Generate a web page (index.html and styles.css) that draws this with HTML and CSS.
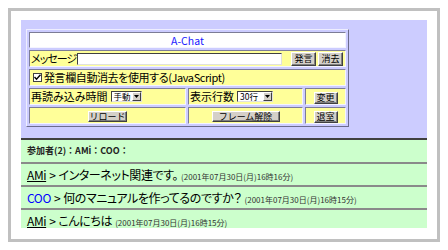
FILE: index.html
```html
<!DOCTYPE html>
<html lang="ja">
<head>
    <meta charset="UTF-8">
    <title>A-Chat</title>
    <link rel="stylesheet" href="styles.css">
</head>
<body>
    <div class="frame">
        <!-- control frame -->
        <div class="control">
            <table class="chat-form">
                <tr>
                    <td colspan="3" class="title">A-Chat</td>
                </tr>
                <tr>
                    <td colspan="3">
                        <div class="msg-row">
                            <span class="label">メッセージ</span>
                            <input class="msg-input" type="text">
                            <span class="btn-group">
                                <button class="btn tall">発言</button>
                                <button class="btn tall">消去</button>
                            </span>
                        </div>
                    </td>
                </tr>
                <tr>
                    <td colspan="3">
                        <label class="check">
                            <span class="checkbox">
                                <svg width="7" height="7" viewBox="0 0 7 7"><path d="M0.5 3 L2.5 5.2 L6.5 0.8" fill="none" stroke="#000" stroke-width="1.4"/></svg>
                            </span>
                            発言欄自動消去を使用する(JavaScript)
                        </label>
                    </td>
                </tr>
                <tr>
                    <td class="col1">
                        <span class="field">再読み込み時間
                            <span class="select w-manual">手動<span class="arrow"><svg width="5" height="3" viewBox="0 0 5 3"><path d="M0 0 H5 L2.5 3 Z" fill="#000"/></svg></span></span>
                        </span>
                    </td>
                    <td class="col2">
                        <span class="field">表示行数
                            <span class="select w-lines">30行<span class="arrow"><svg width="5" height="3" viewBox="0 0 5 3"><path d="M0 0 H5 L2.5 3 Z" fill="#000"/></svg></span></span>
                        </span>
                    </td>
                    <td class="col3 center"><button class="btn">変更</button></td>
                </tr>
                <tr>
                    <td class="center"><button class="btn w-reload">リロード</button></td>
                    <td class="center"><button class="btn w-frame">フレーム解除</button></td>
                    <td class="center"><button class="btn">退室</button></td>
                </tr>
            </table>
        </div>

        <!-- log frame -->
        <div class="log">
            <div class="members">参加者(2)：AMi：COO：</div>
            <div class="line"><a class="name">AMi</a><span class="sep">&gt;</span>インターネット関連です。<span class="date">(2001年07月30日(月)16時16分)</span></div>
            <div class="line"><span class="name coo">COO</span><span class="sep">&gt;</span>何のマニュアルを作ってるのですか？<span class="date">(2001年07月30日(月)16時15分)</span></div>
            <div class="line"><a class="name">AMi</a><span class="sep">&gt;</span>こんにちは<span class="date">(2001年07月30日(月)16時15分)</span></div>
        </div>
    </div>
</body>
</html>
```

FILE: styles.css
```css
body {
    margin: 0;
    background: #fff;
    font-family: "Noto Sans CJK JP", sans-serif;
    font-feature-settings: "palt";
    color: #000;
}

.frame {
    margin: 8px;
    width: 406px;
    height: 208px;
    border: 3px solid #c0c0c0;
    padding: 9px 10px 11px 10px;
}

.control {
    background: #ccccff;
    height: 120px;
    border-bottom: 2px solid #404040;
    padding: 9px 0 0 5px;
    box-sizing: border-box;
}

.chat-form {
    border-spacing: 2px;
    border: 1px solid;
    border-color: #eeeeff #6c6c8c #6c6c8c #eeeeff;
    font-size: 11px;
    line-height: 13px;
}

.chat-form td {
    background: #ffff99;
    border: 1px solid;
    border-color: #7c7c96 #f4f4ff #f4f4ff #7c7c96;
    height: 17px;
    padding: 0 1px;
    box-sizing: border-box;
    white-space: nowrap;
}

.chat-form td.title {
    background: #fff;
    color: #1a1aff;
    text-align: center;
    height: 16px;
    font-size: 10.5px;
}

.chat-form td.center {
    text-align: center;
}

.col1 { width: 157px; }
.col2 { width: 115px; }
.col3 { width: 41px; }

.msg-row {
    display: flex;
    align-items: center;
}

.msg-row .label {
    letter-spacing: -1px;
}

.msg-input {
    width: 205px;
    height: 12px;
    margin: 0 0 0 1px;
    padding: 0;
    box-sizing: border-box;
    border: 1px solid;
    border-color: #404040 #e0e0e0 #e0e0e0 #404040;
    background: #fff;
}

.btn-group {
    margin-left: auto;
    display: flex;
    gap: 2px;
    padding-right: 1px;
}

.btn {
    font-family: inherit;
    font-size: 9px;
    line-height: 9px;
    height: 12px;
    width: 24px;
    padding: 0;
    background: #d4d0c8;
    color: #000;
    border: 1px solid;
    border-color: #fff #404040 #404040 #fff;
    box-shadow: inset -1px -1px 0 #808080;
    vertical-align: middle;
}

.btn.tall {
    height: 14px;
    width: 25px;
}

.btn.w-reload { width: 39px; height: 11px; }
.btn.w-frame { width: 68px; height: 11px; }

.check {
    display: flex;
    align-items: center;
    padding-left: 2px;
    letter-spacing: -0.4px;
}

.checkbox {
    display: inline-flex;
    align-items: center;
    justify-content: center;
    width: 9px;
    height: 9px;
    box-sizing: border-box;
    border: 1px solid #404040;
    background: #fff;
    margin-right: 2px;
}

.field {
    display: flex;
    align-items: center;
}

.select {
    display: inline-flex;
    align-items: center;
    justify-content: space-between;
    height: 11px;
    box-sizing: border-box;
    border: 1px solid;
    border-color: #404040 #e0e0e0 #e0e0e0 #404040;
    background: #fff;
    font-size: 8.5px;
    line-height: 9px;
    padding-left: 2px;
    margin-left: 3px;
}

.w-manual { width: 31px; }
.w-lines { width: 36px; }

.arrow {
    display: inline-flex;
    align-items: center;
    justify-content: center;
    width: 9px;
    height: 9px;
    box-sizing: border-box;
    background: #d4d0c8;
    border: 1px solid;
    border-color: #fff #404040 #404040 #fff;
}

.log {
    background: #ccffcc;
    height: 88px;
    overflow: hidden;
}

.members {
    height: 22px;
    line-height: 22px;
    font-size: 9px;
    font-weight: bold;
    font-feature-settings: normal;
    padding-left: 6px;
    color: #222;
}

.line {
    border-top: 2px solid #8a8a8a;
    height: 21px;
    line-height: 21px;
    font-size: 12px;
    letter-spacing: -0.4px;
    padding-left: 6px;
    white-space: nowrap;
}

.name {
    color: #000;
    text-decoration: underline;
}

.name.coo {
    color: #0000ff;
    text-decoration: none;
}

.sep {
    margin: 0 3px;
}

.date {
    font-size: 8px;
    letter-spacing: 0;
    color: #333;
    margin-left: 3px;
}
```
